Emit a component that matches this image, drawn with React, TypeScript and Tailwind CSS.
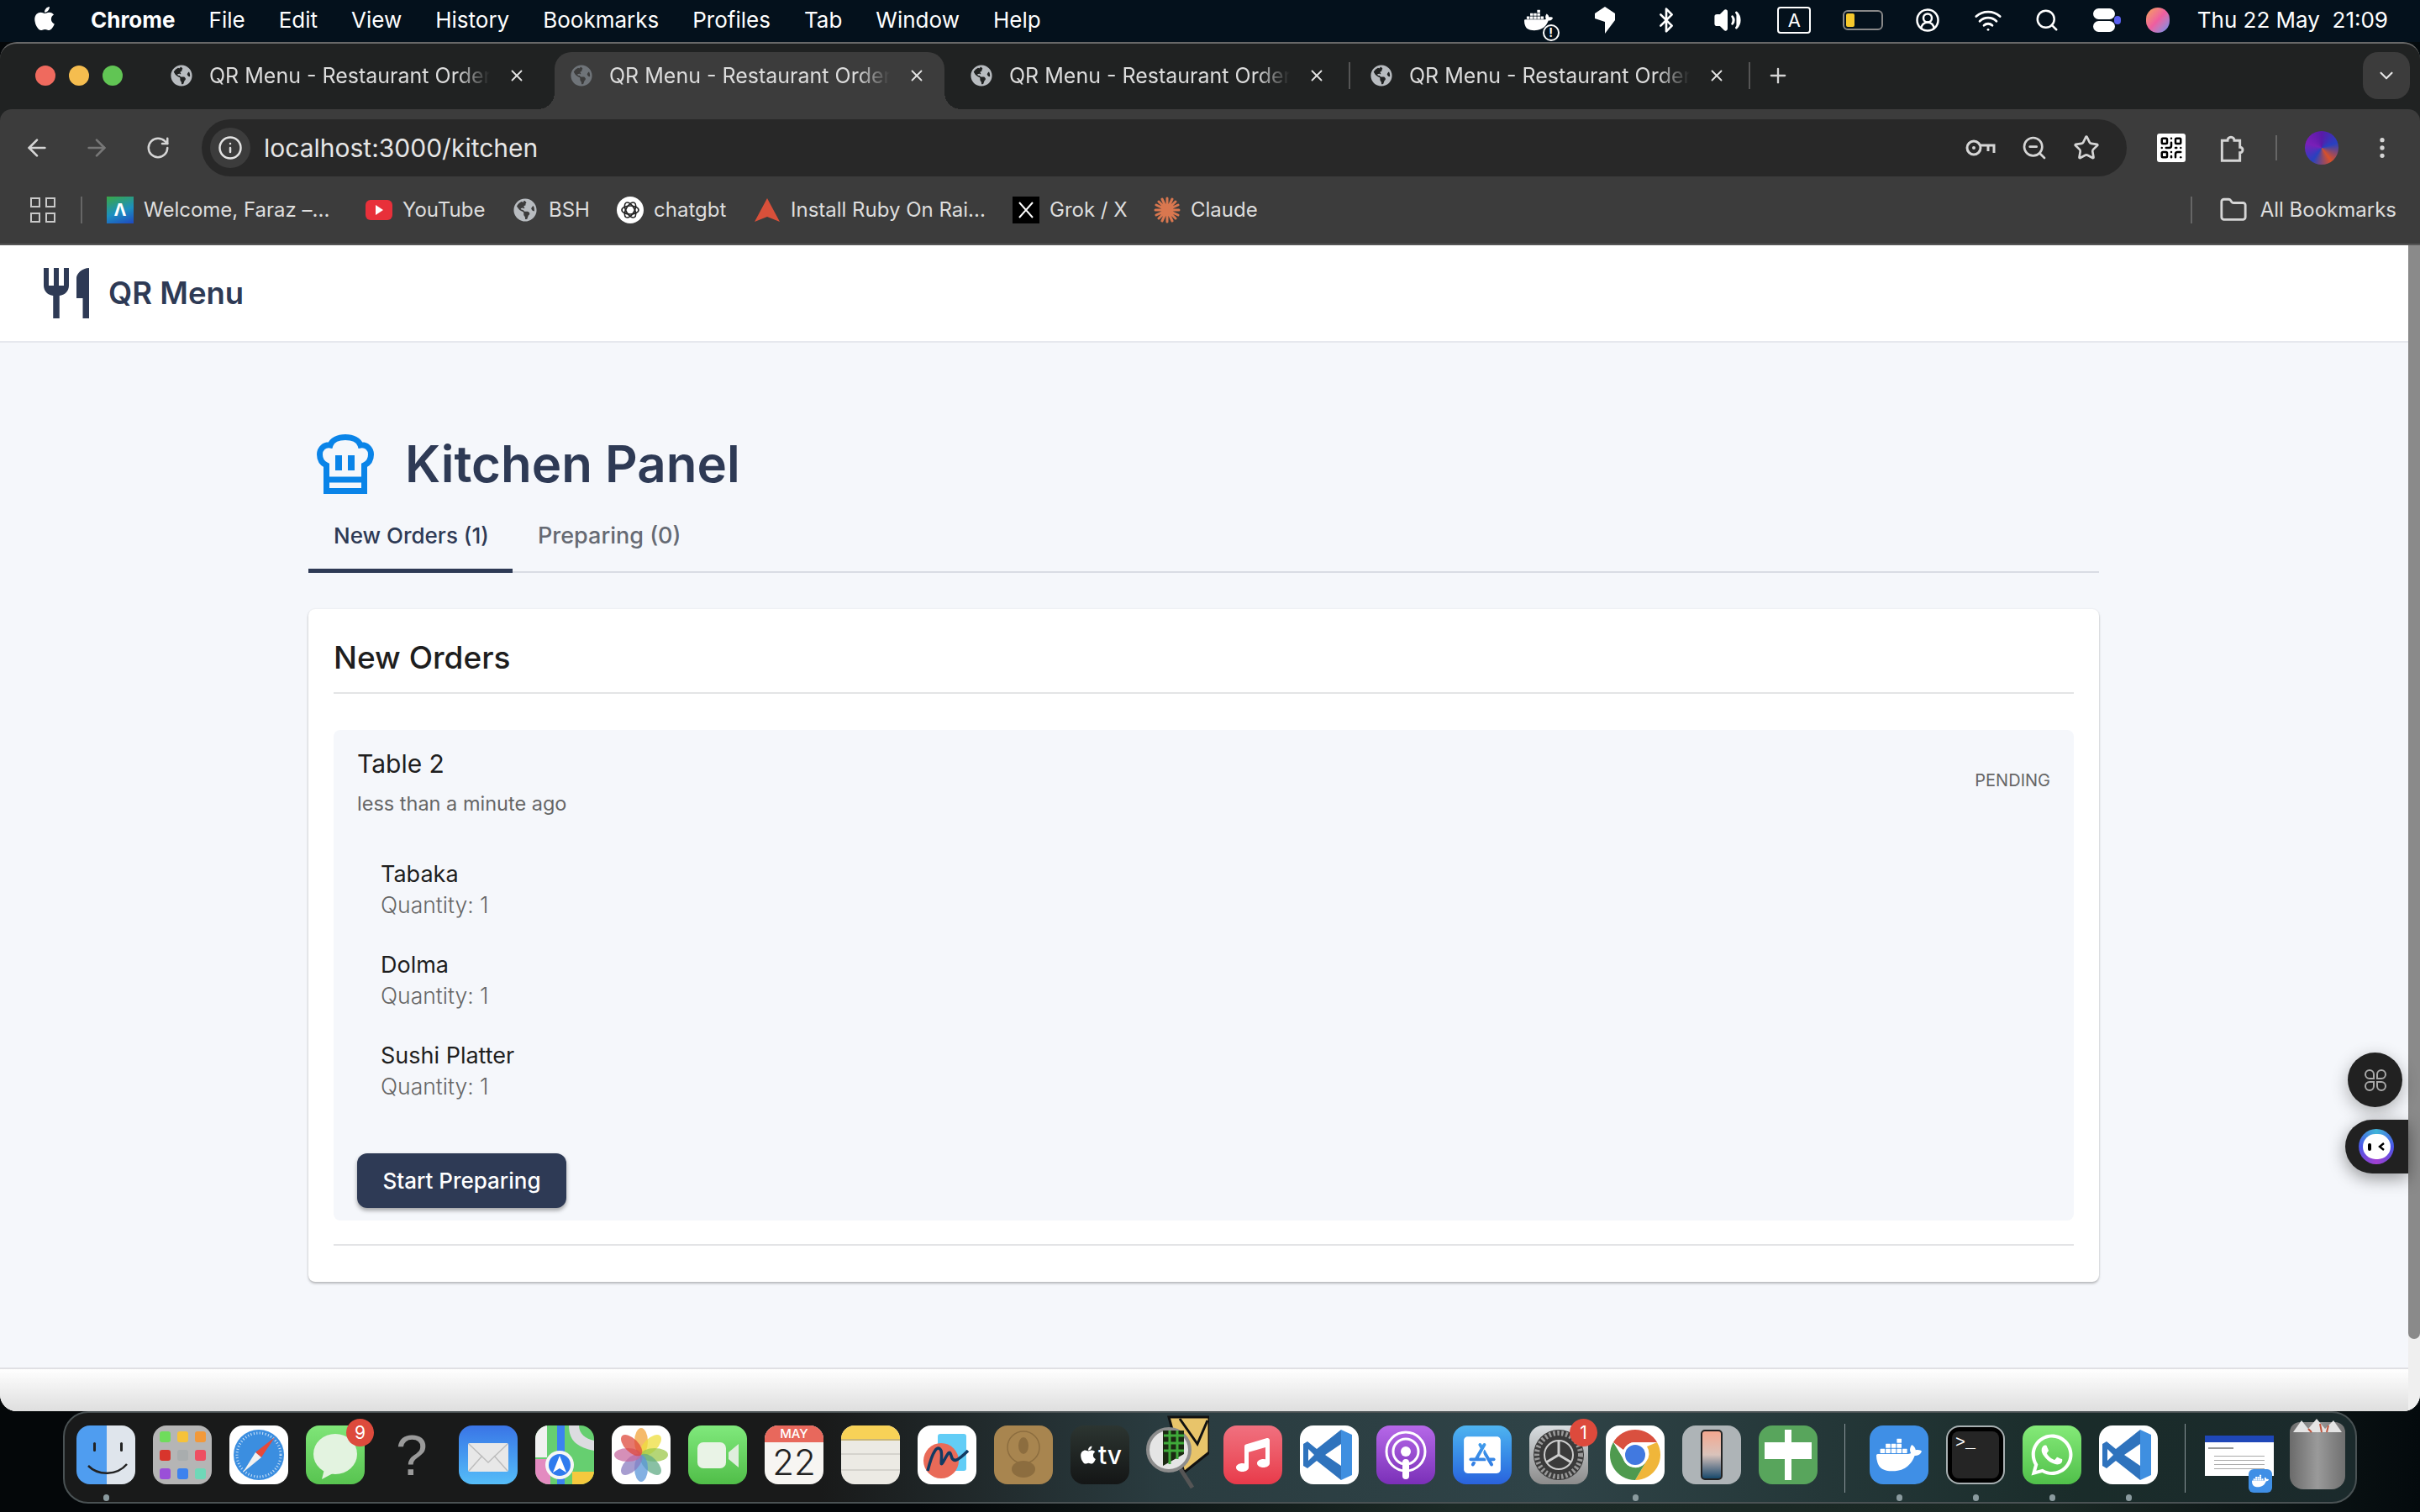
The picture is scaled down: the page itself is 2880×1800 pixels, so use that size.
import type { ReactNode } from 'react';
import {
    ArrowLeft,
    ArrowRight,
    Bluetooth,
    ChevronDown,
    CircleUserRound,
    EllipsisVertical,
    Folder,
    Info,
    Plus,
    QrCode,
    RotateCw,
    Search,
    Star,
    Volume2,
    Wifi,
    X,
    ZoomOut
} from 'lucide-react';
import { FaApple, FaAppStoreIos, FaGlobeAmericas, FaMusic, FaWhatsapp } from 'react-icons/fa';
import { SiDocker } from 'react-icons/si';

const MENU_ITEMS = ['File', 'Edit', 'View', 'History', 'Bookmarks', 'Profiles', 'Tab', 'Window', 'Help'];
const ORDER_ITEMS = ['Tabaka', 'Dolma', 'Sushi Platter'];

const Tab = ({ active, sep }: { active?: boolean; sep?: boolean }) => (
    <div className="relative w-[464px] h-[68px] shrink-0">
        <div className={`flex items-center h-full pl-[19px] pr-[22px] pb-[12px] rounded-t-[20px] ${active ? 'bg-[#3c3c3c]' : ''}`}>
            <FaGlobeAmericas size={26} className={active ? 'text-[#6f7479] shrink-0' : 'text-[#b8bcc0] shrink-0'} />
            <span className="ml-[20px] w-[334px] whitespace-nowrap text-[25px] leading-none text-[#dcdcdc] [mask-image:linear-gradient(to_right,black_88%,transparent)]">
                QR Menu - Restaurant Orderi
            </span>
            <X size={22} className="ml-auto text-[#e3e3e3] shrink-0" />
        </div>
        {active && (
            <>
                <div className="absolute bottom-0 left-[-20px] w-5 h-5 bg-[radial-gradient(circle_at_0_0,transparent_20px,#3c3c3c_20px)]" />
                <div className="absolute bottom-0 right-[-20px] w-5 h-5 bg-[radial-gradient(circle_at_100%_0,transparent_20px,#3c3c3c_20px)]" />
            </>
        )}
        {sep && <div className="absolute right-[-7px] top-[12px] w-[2px] h-[32px] bg-[#555]" />}
    </div>
);

const Bookmark = ({ icon, label, width }: { icon: ReactNode; label: string; width: string }) => (
    <div className={`flex items-center shrink-0 ${width}`}>
        <div className="w-[32px] h-[32px] flex items-center justify-center shrink-0">{icon}</div>
        <span className="ml-[12px] text-[24px] leading-none text-[#dedede] whitespace-nowrap">{label}</span>
    </div>
);

const Squircle = ({ className, children }: { className: string; children?: ReactNode }) => (
    <div className={`w-[70px] h-[70px] rounded-[16px] overflow-hidden shrink-0 flex items-center justify-center relative ${className}`}>
        {children}
    </div>
);

const DockSlot = ({ children, dot, badge }: { children: ReactNode; dot?: boolean; badge?: string }) => (
    <div className="relative w-[70px] h-[70px] shrink-0">
        {children}
        {badge && (
            <div className="absolute top-[-8px] right-[-11px] w-[33px] h-[33px] rounded-full bg-[#dd4a3c] flex items-center justify-center text-[21px] text-white">
                {badge}
            </div>
        )}
        {dot && <div className="absolute bottom-[-20px] left-[32px] w-[7px] h-[8px] rounded-full bg-[#8a9a9e]" />}
    </div>
);

const VsCodeMark = () => (
    <svg viewBox="0 0 70 70" className="w-full h-full">
        <path d="M49 5 L20 28 L9 19 L4 22 V48 L9 51 L20 42 L49 65 V48 L30 35 L49 22 Z" fill="#2f73bd" />
        <path d="M49 5 L62 11 V59 L49 65 Z" fill="#3f8fe0" />
        <path d="M10 28 L17 35 L10 42 Z" fill="#fff" />
    </svg>
);

const MenuIcon = ({ width, children }: { width: string; children: ReactNode }) => (
    <div className={`${width} flex items-center justify-center shrink-0`}>{children}</div>
);

const Dock = () => (
    <div className="ml-[75px] w-[2730px] h-[110px] rounded-[30px] border-2 border-[#4a5254] bg-[linear-gradient(to_right,#191a1a_0%,#191a1a_33%,#2a3c40_48%,#2f4347_65%,#1a2c2a_88%,#1b2a2c_100%)] flex pl-[14px] pt-[15px]">
        <div className="flex gap-[21px]">
            <DockSlot dot>
                <Squircle className="bg-[linear-gradient(to_right,#4f9df0_52%,#dfe5ec_52%)]">
                    <svg viewBox="0 0 70 70" className="w-full h-full">
                        <rect x="20" y="20" width="3" height="11" rx="1.5" fill="#222" />
                        <rect x="52" y="20" width="3" height="11" rx="1.5" fill="#222" />
                        <path d="M14 48 C26 60 48 60 60 46" fill="none" stroke="#222" strokeWidth="2.5" />
                    </svg>
                </Squircle>
            </DockSlot>
            <DockSlot>
                <Squircle className="bg-[#b5b5b5]">
                    <div className="grid grid-cols-3 gap-x-[8px] gap-y-[9px]">
                        {['bg-[#6fdc5c]', 'bg-[#f6c23a]', 'bg-[#f2993a]', 'bg-[#d8352c]', 'bg-[#a9adae]', 'bg-[#ee4f62]', 'bg-[#9a4fd8]', 'bg-[#3d82ee]', 'bg-[#6fd8b8]'].map((c) => (
                            <div key={c} className={`w-[13px] h-[13px] rounded-[3px] ${c}`} />
                        ))}
                    </div>
                </Squircle>
            </DockSlot>
            <DockSlot>
                <Squircle className="bg-white">
                    <svg viewBox="0 0 70 70" className="w-full h-full">
                        <circle cx="35" cy="35" r="30" fill="#3b8ee0" />
                        <circle cx="35" cy="35" r="26" fill="none" stroke="#cfe4f8" strokeWidth="3" strokeDasharray="1 2.5" />
                        <path d="M54 14 L31 32 L38 38 Z" fill="#e5493a" />
                        <path d="M16 56 L31 32 L38 38 Z" fill="#f1f1f1" />
                    </svg>
                </Squircle>
            </DockSlot>
            <DockSlot badge="9">
                <Squircle className="bg-linear-to-b from-[#7fe578] to-[#58c450]">
                    <svg viewBox="0 0 70 70" className="w-full h-full">
                        <ellipse cx="35" cy="34" rx="26" ry="24" fill="#e3f3e0" />
                        <path d="M22 52 L19 64 L34 56 Z" fill="#e3f3e0" />
                    </svg>
                </Squircle>
            </DockSlot>
            <DockSlot>
                <div className="w-full h-full flex items-center justify-center text-[68px] font-[Liberation_Sans,sans-serif] leading-[70px] text-[#9a9a9a]">?</div>
            </DockSlot>
            <DockSlot>
                <Squircle className="bg-linear-to-b from-[#3a74e6] to-[#56bdf8]">
                    <svg viewBox="0 0 70 70" className="w-full h-full">
                        <rect x="11" y="21" width="48" height="34" rx="2" fill="#e8e8e8" />
                        <path d="M12 22 L35 44 L58 22 M12 54 L28 36 M58 54 L42 36" fill="none" stroke="#bdbdbd" strokeWidth="1.5" />
                    </svg>
                </Squircle>
            </DockSlot>
            <DockSlot>
                <Squircle className="bg-[#66cf70]">
                    <svg viewBox="0 0 70 70" className="w-full h-full">
                        <rect x="0" y="40" width="18" height="30" fill="#e38bc0" />
                        <rect x="44" y="55" width="26" height="15" fill="#f5c93e" />
                        <path d="M0 0 H14 V38 L0 38 Z" fill="#f1f1f1" />
                        <path d="M26 0 H35 V70 H26 Z" fill="#3b82f0" />
                        <path d="M40 0 C40 20 52 26 70 30 V18 C60 16 52 10 52 0 Z" fill="#dcdce0" />
                        <circle cx="29" cy="47" r="17" fill="#f6f6f6" />
                        <circle cx="29" cy="47" r="13" fill="#2f7bee" />
                        <path d="M29 36 L37 56 L29 51 L21 56 Z" fill="#fff" />
                    </svg>
                </Squircle>
            </DockSlot>
            <DockSlot>
                <Squircle className="bg-white">
                    <svg viewBox="0 0 70 70" className="w-full h-full">
                        {[
                            ['#f2a33a', 0],
                            ['#eedd3c', 45],
                            ['#9cc84a', 90],
                            ['#62ab86', 135],
                            ['#5a96d8', 180],
                            ['#8a7cc0', 225],
                            ['#c76aa0', 270],
                            ['#dd4a3c', 315]
                        ].map(([c, a]) => (
                            <ellipse key={String(a)} cx="35" cy="19" rx="8" ry="16" fill={String(c)} fillOpacity="0.75" transform={`rotate(${a} 35 35)`} />
                        ))}
                    </svg>
                </Squircle>
            </DockSlot>
            <DockSlot>
                <Squircle className="bg-linear-to-b from-[#80e97c] to-[#50be48]">
                    <svg viewBox="0 0 70 70" className="w-full h-full">
                        <rect x="11" y="20" width="34" height="31" rx="7" fill="#e9f3e6" />
                        <path d="M48 32 L60 22 V50 L48 40 Z" fill="#dfeedd" />
                    </svg>
                </Squircle>
            </DockSlot>
            <DockSlot>
                <Squircle className="bg-[#f7f5f2] flex-col justify-start">
                    <div className="w-full h-[20px] bg-[#e8685c] text-white text-[15px] leading-[20px] text-center font-medium">MAY</div>
                    <div className="text-[#222] text-[42px] leading-[48px] font-light">22</div>
                </Squircle>
            </DockSlot>
            <DockSlot>
                <Squircle className="bg-[#eceae4] flex-col justify-start">
                    <div className="w-full h-[18px] bg-[#f8d257] border-b-2 border-[#c9b677]" />
                    <div className="w-full h-[2px] bg-[#d5d3cd] mt-[15px]" />
                    <div className="w-full h-[2px] bg-[#d5d3cd] mt-[17px]" />
                </Squircle>
            </DockSlot>
            <DockSlot>
                <Squircle className="bg-white">
                    <svg viewBox="0 0 70 70" className="w-full h-full">
                        <rect x="24" y="10" width="34" height="44" rx="3" fill="#62cdf6" />
                        <circle cx="28" cy="42" r="21" fill="#e96a58" />
                        <path d="M12 54 C18 30 24 22 28 30 C30 38 26 50 30 44 C36 34 38 28 40 36 C42 44 46 44 60 30" fill="none" stroke="#123a62" strokeWidth="3.5" />
                    </svg>
                </Squircle>
            </DockSlot>
            <DockSlot>
                <Squircle className="bg-[#a8854f]">
                    <svg viewBox="0 0 70 70" className="w-full h-full">
                        <circle cx="35" cy="26" r="19" fill="none" stroke="#8c6d3f" strokeWidth="1.5" />
                        <ellipse cx="35" cy="24" rx="6" ry="10" fill="#8c6d3f" />
                        <ellipse cx="35" cy="52" rx="14" ry="10" fill="#8c6d3f" />
                    </svg>
                </Squircle>
            </DockSlot>
            <DockSlot>
                <Squircle className="bg-linear-to-b from-[#2c3531] to-[#141616]">
                    <div className="flex items-center text-white">
                        <FaApple size={24} />
                        <span className="text-[30px] leading-none font-medium">tv</span>
                    </div>
                </Squircle>
            </DockSlot>
            <DockSlot>
                <svg viewBox="0 0 80 90" className="w-[80px] h-[90px] absolute left-[-6px] top-[-14px]">
                    <path d="M32 4 H80 V46 L50 70 Z" fill="#e8c46a" stroke="#111" strokeWidth="3" />
                    <path d="M45 6 L66 36 L78 8" fill="none" stroke="#111" strokeWidth="3" />
                    <line x1="46" y1="66" x2="60" y2="88" stroke="#555" strokeWidth="5" />
                    <circle cx="32" cy="43" r="25" fill="#e5e5e5" stroke="#8c8c8c" strokeWidth="4" />
                    <path d="M25 20 H50 V48 L25 62 Z" fill="#1b2a12" />
                    <path d="M26 26 H50 M26 35 H50 M26 44 H50 M33 20 V60 M42 20 V54" stroke="#3faa3a" strokeWidth="3" />
                </svg>
            </DockSlot>
            <DockSlot>
                <Squircle className="bg-linear-to-b from-[#f0707f] to-[#e8394a]">
                    <FaMusic size={40} className="text-white" />
                </Squircle>
            </DockSlot>
            <DockSlot>
                <Squircle className="bg-white">
                    <VsCodeMark />
                </Squircle>
            </DockSlot>
            <DockSlot>
                <Squircle className="bg-linear-to-b from-[#b668e8] to-[#7b2fb8]">
                    <svg viewBox="0 0 70 70" className="w-full h-full" fill="none" stroke="#fff" strokeWidth="3">
                        <circle cx="35" cy="31" r="23" />
                        <circle cx="35" cy="31" r="15" />
                        <circle cx="35" cy="31" r="6" fill="#fff" stroke="none" />
                        <rect x="31" y="40" width="8" height="24" rx="4" fill="#fff" stroke="none" />
                    </svg>
                </Squircle>
            </DockSlot>
            <DockSlot>
                <Squircle className="bg-linear-to-b from-[#4fb4f0] to-[#2a62dd]">
                    <FaAppStoreIos size={50} className="text-white" />
                </Squircle>
            </DockSlot>
            <DockSlot badge="1">
                <Squircle className="bg-linear-to-b from-[#d8dde0] to-[#8c8c8c]">
                    <svg viewBox="0 0 70 70" className="w-full h-full" fill="none">
                        <circle cx="35" cy="35" r="30" fill="#3a3a3a" />
                        <circle cx="35" cy="35" r="26" stroke="#999" strokeWidth="6" strokeDasharray="2.5 2.5" />
                        <circle cx="35" cy="35" r="17" stroke="#ccc" strokeWidth="2" />
                        <path d="M35 35 V18 M35 35 L50 44 M35 35 L20 44" stroke="#ccc" strokeWidth="3" />
                    </svg>
                </Squircle>
            </DockSlot>
            <DockSlot dot>
                <Squircle className="bg-white">
                    <svg viewBox="0 0 70 70" className="w-full h-full">
                        <path d="M35 5 A30 30 0 0 1 61 20 H35 A15 15 0 0 0 21 29 L9 20 A30 30 0 0 1 35 5 Z" fill="#d9503f" />
                        <path d="M61 20 A30 30 0 0 1 35 65 L48 43 A15 15 0 0 0 49 25 Z" fill="#f0b63a" />
                        <path d="M9 20 A30 30 0 0 0 35 65 L48 43 A15 15 0 0 1 21 40 Z" fill="#4f9a4f" />
                        <circle cx="35" cy="35" r="15" fill="#fff" />
                        <circle cx="35" cy="35" r="12" fill="#4179e0" />
                    </svg>
                </Squircle>
            </DockSlot>
            <DockSlot>
                <Squircle className="bg-[#aeb4b7]">
                    <div className="w-[26px] h-[60px] rounded-[5px] bg-linear-to-b from-[#f3a78f] via-[#d9c3bb] to-[#14496b] border-2 border-[#222]" />
                </Squircle>
            </DockSlot>
            <DockSlot>
                <Squircle className="bg-[#58a55c]">
                    <div className="absolute w-[8px] h-[60px] bg-white" />
                    <div className="absolute w-[56px] h-[20px] bg-white top-[20px]" />
                </Squircle>
            </DockSlot>
        </div>
        <div className="w-[1px] h-[82px] bg-[#8a9699] ml-[32px] mt-[-2px]" />
        <div className="flex gap-[21px] ml-[29px]">
            <DockSlot dot>
                <Squircle className="bg-[#3f8fe6]">
                    <SiDocker size={54} className="text-white" />
                </Squircle>
            </DockSlot>
            <DockSlot dot>
                <Squircle className="bg-black border-2 border-[#a8b0b2]">
                    <div className="w-[56px] h-[56px] rounded-[8px] bg-[#252525] text-white font-[Liberation_Mono,monospace] text-[20px] leading-none p-[4px]">{'>_'}</div>
                </Squircle>
            </DockSlot>
            <DockSlot dot>
                <Squircle className="bg-linear-to-b from-[#84ea78] to-[#50c04a]">
                    <FaWhatsapp size={56} className="text-white" />
                </Squircle>
            </DockSlot>
            <DockSlot dot>
                <Squircle className="bg-white">
                    <VsCodeMark />
                </Squircle>
            </DockSlot>
        </div>
        <div className="w-[1px] h-[82px] bg-[#8a9699] ml-[32px] mt-[-2px]" />
        <div className="relative w-[82px] h-[48px] ml-[23px] mt-[12px] bg-white shrink-0">
            <div className="w-full h-[8px] bg-[#1f47b8]" />
            <div className="mt-[6px] ml-[4px] w-[30px] h-[2px] bg-[#999]" />
            <div className="mt-[8px] mx-auto w-[60px] h-[20px] bg-[repeating-linear-gradient(to_bottom,#aaa_0,#aaa_1px,#fff_1px,#fff_5px)]" />
            <div className="absolute right-[2px] top-[40px] w-[28px] h-[28px] rounded-[6px] bg-[#3f8fe6] flex items-center justify-center">
                <SiDocker size={20} className="text-white" />
            </div>
        </div>
        <div className="relative w-[66px] h-[80px] ml-[19px] mt-[-4px] rounded-b-[16px] rounded-t-[12px] bg-linear-to-r from-[#6b6b6b] via-[#9a9a9a] to-[#707070] shrink-0">
            <svg viewBox="0 0 66 20" className="absolute left-0 top-[-6px] w-[66px] h-[20px]">
                <path d="M4 18 L14 4 L22 14 L32 2 L42 14 L52 4 L62 18 Z" fill="#e4e4e4" />
                <path d="M22 14 L26 18 M36 8 L38 18 M46 10 L44 18" stroke="#c0563f" strokeWidth="2" />
            </svg>
        </div>
    </div>
);

const ChefHat = () => (
    <svg viewBox="0 0 68 71" className="w-[68px] h-[71px]" fill="none">
        <path
            d="M11.5 37C5 34 3.5 28 3.5 24C3.5 17 9 12 16 13C18 7 25 3.5 34 3.5C43 3.5 50 7 52 13C59 12 64.5 17 64.5 24C64.5 28 63 34 56.5 37V67.5H11.5Z"
            stroke="#0a84e8"
            strokeWidth="7"
        />
        <path d="M11.5 54H56.5" stroke="#0a84e8" strokeWidth="7" />
        <rect x="22" y="25" width="8" height="18" fill="#0a84e8" />
        <rect x="37" y="25" width="8" height="18" fill="#0a84e8" />
    </svg>
);

const App = () => {
    return (
        <div className="w-[2880px] h-[1800px] overflow-hidden flex flex-col bg-[linear-gradient(to_right,#040709_0%,#040709_38%,#1c2a26_60%,#1a2824_85%,#040a0d_100%)] font-[Inter,sans-serif]">
            {/* macOS menu bar */}
            <div className="h-[50px] shrink-0 bg-[#04111c] flex items-center pl-[37px] pr-[38px] pb-[2px] text-white text-[26px] leading-none">
                <FaApple size={32} className="mt-[-4px]" />
                <span className="ml-[39px] font-bold">Chrome</span>
                <div className="flex gap-[40px] ml-[40px]">
                    {MENU_ITEMS.map((item) => (
                        <span key={item}>{item}</span>
                    ))}
                </div>
                <div className="ml-auto flex items-center">
                    <MenuIcon width="w-[82px]">
                        <div className="relative">
                            <SiDocker size={34} />
                            <div className="absolute right-[-8px] bottom-[-8px] w-[20px] h-[20px] rounded-full bg-[#04111c] border-2 border-white flex items-center justify-center text-[14px] font-bold">!</div>
                        </div>
                    </MenuIcon>
                    <MenuIcon width="w-[76px]">
                        <svg viewBox="0 0 24 32" className="w-[26px] h-[32px]" fill="white"><path d="M12 0 L24 8 V16 L12 32 V18 L0 14 V8 Z" /></svg>
                    </MenuIcon>
                    <MenuIcon width="w-[70px]"><Bluetooth size={32} /></MenuIcon>
                    <MenuIcon width="w-[76px]"><Volume2 size={34} fill="white" /></MenuIcon>
                    <MenuIcon width="w-[83px]">
                        <div className="w-[40px] h-[32px] border-2 border-white rounded-[4px] flex items-center justify-center text-[22px]">A</div>
                    </MenuIcon>
                    <MenuIcon width="w-[80px]">
                        <div className="w-[48px] h-[24px] border-2 border-[#888] rounded-[6px] p-[2px]">
                            <div className="w-[10px] h-full bg-[#f7c92c] rounded-[2px]" />
                        </div>
                    </MenuIcon>
                    <MenuIcon width="w-[74px]"><CircleUserRound size={30} /></MenuIcon>
                    <MenuIcon width="w-[70px]"><Wifi size={34} /></MenuIcon>
                    <MenuIcon width="w-[70px]"><Search size={30} /></MenuIcon>
                    <MenuIcon width="w-[66px]">
                        <div className="flex flex-col gap-[2px] relative">
                            <div className="w-[26px] h-[13px] rounded-full bg-white" />
                            <div className="w-[26px] h-[13px] rounded-full bg-white" />
                            <div className="absolute right-[-7px] top-[9px] w-[8px] h-[10px] rounded-full bg-[#5a5ff0]" />
                        </div>
                    </MenuIcon>
                    <MenuIcon width="w-[62px]">
                        <div className="w-[28px] h-[30px] rounded-full bg-linear-to-br from-[#f6a14a] via-[#ee5da0] to-[#4f8df0]" />
                    </MenuIcon>
                    <span className="ml-[16px] whitespace-pre">Thu 22 May  21:09</span>
                </div>
            </div>

            {/* Browser window */}
            <div className="h-[1630px] shrink-0 flex flex-col rounded-t-[20px] rounded-b-[20px] overflow-hidden border-t-2 border-[#686868] bg-[#202222]">
                <div className="h-[78px] shrink-0 flex pt-[10px] pl-[42px] pr-[12px]">
                    <div className="flex gap-[16px] h-[24px] mt-[16px]">
                        <div className="w-[24px] h-[24px] rounded-full bg-[#ef6a5e]" />
                        <div className="w-[24px] h-[24px] rounded-full bg-[#f5bd4f]" />
                        <div className="w-[24px] h-[24px] rounded-full bg-[#61c554]" />
                    </div>
                    <div className="flex gap-[12px] ml-[38px]">
                        <Tab />
                        <Tab active />
                        <Tab sep />
                        <Tab sep />
                    </div>
                    <Plus size={28} className="ml-[26px] mt-[14px] text-[#d5d5d5]" />
                    <div className="ml-auto w-[56px] h-[56px] rounded-[18px] bg-[#3c3c3c] flex items-center justify-center">
                        <ChevronDown size={26} className="text-[#e3e3e3]" />
                    </div>
                </div>

                <div className="h-[80px] shrink-0 bg-[#3c3c3c] rounded-t-[14px] flex items-start pt-[12px]">
                    <div className="w-[240px] h-[68px] flex items-center text-[#d5d5d5] pl-[28px]">
                        <ArrowLeft size={32} />
                        <ArrowRight size={32} className="ml-[39px] text-[#777]" />
                        <RotateCw size={30} className="ml-[42px]" />
                    </div>
                    <div className="w-[2291px] h-[68px] rounded-full bg-[#282828] flex items-center pl-[10px] pr-[32px]">
                        <div className="w-[48px] h-[48px] rounded-full bg-[#3c3c3c] flex items-center justify-center">
                            <Info size={30} className="text-[#e3e3e3]" />
                        </div>
                        <span className="ml-[16px] text-[30px] leading-none text-[#e6e6e6]">localhost:3000/kitchen</span>
                        <div className="ml-auto flex items-center gap-[30px] text-[#d5d5d5]">
                            <svg viewBox="0 0 36 24" className="w-[36px] h-[24px]" fill="none" stroke="currentColor" strokeWidth="3">
                                <circle cx="10" cy="12" r="8" />
                                <circle cx="10" cy="12" r="2" fill="currentColor" stroke="none" />
                                <path d="M18 9H34V18M27 9V16" />
                            </svg>
                            <ZoomOut size={32} />
                            <Star size={32} />
                        </div>
                    </div>
                    <div className="flex-1 h-[68px] flex items-center text-[#d5d5d5] pl-[36px]">
                        <div className="w-[34px] h-[34px] bg-white rounded-[3px] flex items-center justify-center">
                            <QrCode size={30} className="text-black" />
                        </div>
                        <svg viewBox="0 0 24 26" className="w-[32px] h-[35px] ml-[38px]" fill="none" stroke="currentColor" strokeWidth="2.2">
                            <path d="M4 6h5a3 3 0 0 1 6 0h5v6a2.5 2.5 0 0 1 0 5v7H4Z" />
                        </svg>
                        <div className="w-[2px] h-[30px] bg-[#666] ml-[37px]" />
                        <div className="w-[40px] h-[40px] rounded-full ml-[33px] bg-[conic-gradient(#5a1aa8,#2741c0,#d8502a,#2741c0,#7a1fb8,#5a1aa8)]" />
                        <EllipsisVertical size={32} className="ml-[36px]" />
                    </div>
                </div>

                <div className="h-[82px] shrink-0 bg-[#3c3c3c] border-b-2 border-[#555] flex items-center pl-[36px] pr-[28px]">
                    <div className="grid grid-cols-2 gap-[6px]">
                        {[0, 1, 2, 3].map((i) => (
                            <div key={i} className="w-[12px] h-[12px] border-2 border-[#c8c8c8]" />
                        ))}
                    </div>
                    <div className="w-[2px] h-[32px] bg-[#666] ml-[30px] mr-[29px]" />
                    <Bookmark
                        width="w-[308px]"
                        label="Welcome, Faraz –..."
                        icon={<div className="w-[32px] h-[32px] bg-[linear-gradient(160deg,#3aa845,#1c8fc0_55%,#1f48c0)] flex items-center justify-center text-white text-[20px] font-bold leading-none">Λ</div>}
                    />
                    <Bookmark
                        width="w-[174px]"
                        label="YouTube"
                        icon={
                            <div className="w-[32px] h-[24px] rounded-[6px] bg-[#e8303a] flex items-center justify-center">
                                <div className="w-0 h-0 border-y-[6px] border-y-transparent border-l-[9px] border-l-white" />
                            </div>
                        }
                    />
                    <Bookmark width="w-[125px]" label="BSH" icon={<FaGlobeAmericas size={28} className="text-[#b8bcc0]" />} />
                    <Bookmark
                        width="w-[163px]"
                        label="chatgbt"
                        icon={
                            <div className="w-[32px] h-[32px] rounded-full bg-white flex items-center justify-center">
                                <svg viewBox="0 0 24 24" className="w-[24px] h-[24px]" fill="none" stroke="#222" strokeWidth="1.6">
                                    <ellipse cx="12" cy="12" rx="10" ry="5" />
                                    <ellipse cx="12" cy="12" rx="10" ry="5" transform="rotate(60 12 12)" />
                                    <ellipse cx="12" cy="12" rx="10" ry="5" transform="rotate(120 12 12)" />
                                </svg>
                            </div>
                        }
                    />
                    <Bookmark
                        width="w-[308px]"
                        label="Install Ruby On Rai..."
                        icon={
                            <svg viewBox="0 0 32 32" className="w-[32px] h-[32px]">
                                <path d="M16 2 L31 30 L16 24 L1 30 Z" fill="#d9503a" />
                            </svg>
                        }
                    />
                    <Bookmark
                        width="w-[168px]"
                        label="Grok / X"
                        icon={
                            <div className="w-[32px] h-[32px] bg-black flex items-center justify-center">
                                <svg viewBox="0 0 24 24" className="w-[24px] h-[24px]" fill="none" stroke="#fff">
                                    <path d="M4 3 L20 21 M20 3 L4 21" strokeWidth="2" />
                                </svg>
                            </div>
                        }
                    />
                    <Bookmark
                        width="w-auto"
                        label="Claude"
                        icon={
                            <svg viewBox="0 0 32 32" className="w-[32px] h-[32px]" stroke="#d9774f" strokeWidth="3" strokeLinecap="round">
                                <path d="M16 2V30M2 16H30M6 6L26 26M26 6L6 26M10 3L22 29M22 3L10 29M3 10L29 22M3 22L29 10" />
                            </svg>
                        }
                    />
                    <div className="ml-auto flex items-center">
                        <div className="w-[2px] h-[32px] bg-[#666] mr-[32px]" />
                        <Folder size={34} className="text-[#d5d5d5]" />
                        <span className="ml-[15px] text-[24px] leading-none text-[#dedede]">All Bookmarks</span>
                    </div>
                </div>

                {/* Page */}
                <div className="flex-1 min-h-0 flex bg-white">
                    <div className="relative flex-1 flex flex-col min-w-0">
                        <header className="h-[116px] shrink-0 bg-white border-b-2 border-[#e6e8ee] flex items-center pl-[43px]">
                            <svg viewBox="0 0 24 24" className="w-[72px] h-[72px]" fill="#2e3a55">
                                <path d="M11 9H9V2H7v7H5V2H3v7c0 2.12 1.66 3.84 3.75 3.97V22h2.5v-9.03C11.34 12.84 13 11.12 13 9V2h-2v7zm5-3v8h2.5v8H21V2c-2.76 0-5 2.24-5 4z" />
                            </svg>
                            <span className="ml-[14px] text-[36.5px] leading-none font-semibold text-[#2e3a55]">QR Menu</span>
                        </header>
                        <main className="flex-1 min-h-0 bg-[#f5f7fb] flex flex-col">
                            <div className="w-[2131px] ml-[367px] flex flex-col">
                                <div className="h-[75px] mt-[107px] flex items-center pl-[10px]">
                                    <ChefHat />
                                    <h1 className="ml-[37px] mb-[2px] text-[60px] leading-none font-semibold text-[#2e3a55]">Kitchen Panel</h1>
                                </div>
                                <div className="h-[92px] flex border-b-2 border-[#d9dce4]">
                                    <div className="w-[243px] h-[92px] shrink-0 flex items-center pt-[8px] pl-[30px] border-b-[5px] border-[#2e3a55] text-[26px] font-medium text-[#2e3a55] whitespace-nowrap">
                                        New Orders (1)
                                    </div>
                                    <div className="h-[92px] flex items-center pt-[9px] pb-[5px] pl-[30px] text-[27px] font-medium text-[#666a73] whitespace-nowrap">
                                        Preparing (0)
                                    </div>
                                </div>
                                <section className="h-[801px] mt-[43px] bg-white rounded-[8px] shadow-[0_2px_3px_rgba(0,0,0,0.25),0_0_2px_rgba(0,0,0,0.08)] px-[30px] flex flex-col">
                                    <div className="h-[101px] shrink-0 border-b-2 border-[#e3e4e6] flex items-center pt-[15px]">
                                        <h2 className="text-[37px] leading-none font-medium text-[#1e1e1e]">New Orders</h2>
                                    </div>
                                    <div className="relative h-[584px] shrink-0 mt-[43px] rounded-[8px] bg-[#f5f7fb] pt-[20px] px-[28px]">
                                        <div className="text-[30px] leading-[40px] text-[#1e1e1e]">Table 2</div>
                                        <div className="mt-[10px] text-[23.5px] leading-[36px] text-[#666]">less than a minute ago</div>
                                        <span className="absolute right-[28px] top-[44px] text-[20px] leading-[32px] text-[#666]">PENDING</span>
                                        <ul className="mt-[47px] pl-[28px] flex flex-col gap-[34px]">
                                            {ORDER_ITEMS.map((name) => (
                                                <li key={name}>
                                                    <div className="text-[27px] leading-[37px] text-[#1e1e1e]">{name}</div>
                                                    <div className="text-[26.5px] leading-[37px] font-light text-[#666]">Quantity: 1</div>
                                                </li>
                                            ))}
                                        </ul>
                                        <button className="mt-[61px] w-[249px] h-[65px] rounded-[12px] bg-[#2e3a55] text-white text-[26px] font-medium shadow-[0_3px_5px_rgba(0,0,0,0.35)]">
                                            Start Preparing
                                        </button>
                                    </div>
                                    <div className="h-[2px] shrink-0 mt-[28px] bg-[#e3e4e6]" />
                                </section>
                            </div>
                            <div className="flex-1 min-h-0" />
                        </main>
                        <footer className="h-[52px] shrink-0 border-t-2 border-[#e0e0e4] bg-linear-to-b from-white to-[#dedede]" />

                        {/* Floating widgets */}
                        <div className="absolute right-[7px] top-[961px] w-[65px] h-[65px] rounded-full bg-[#212121] shadow-[0_6px_20px_rgba(0,0,0,0.3)] flex items-center justify-center">
                            <svg viewBox="0 0 28 28" className="w-[28px] h-[28px]" fill="none" stroke="#a8a8a8" strokeWidth="2">
                                <path d="M12 12H7a5 5 0 1 1 5-5Z" />
                                <path d="M16 12h5a5 5 0 1 0-5-5Z" />
                                <path d="M12 16H7a5 5 0 1 0 5 5Z" />
                                <path d="M16 16h5a5 5 0 1 1-5 5Z" />
                            </svg>
                        </div>
                        <div className="absolute right-0 top-[1041px] w-[75px] h-[64px] rounded-l-full bg-[#212121] shadow-[0_6px_20px_rgba(0,0,0,0.4)] flex items-center pl-[16px]">
                            <div className="w-[42px] h-[42px] rounded-full bg-[conic-gradient(#3fb5d8,#4a55e8,#a23fd0,#4a55e8,#3fb5d8)] flex items-center justify-center">
                                <div className="w-[33px] h-[30px] rounded-full bg-white flex items-center justify-center gap-[8px]">
                                    <div className="w-[4px] h-[9px] bg-black rounded-full" />
                                    <svg viewBox="0 0 8 10" className="w-[8px] h-[10px]" fill="none" stroke="#000" strokeWidth="2.4"><path d="M7 1L2 5l5 4" /></svg>
                                </div>
                            </div>
                        </div>
                    </div>
                    <div className="w-[14px] shrink-0 bg-[#efefef]">
                        <div className="h-[1302px] rounded-b-[7px] bg-[#8a8a8a]" />
                    </div>
                </div>
            </div>

            <Dock />
        </div>
    );
};

export default App;
